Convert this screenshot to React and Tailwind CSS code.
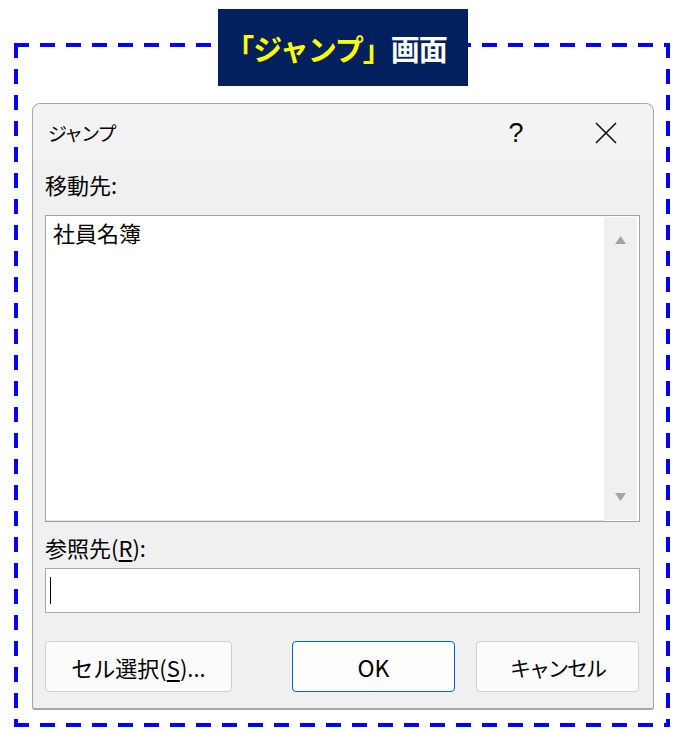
export default function App() {
  const font = { fontFamily: '"Noto Sans CJK JP", "Noto Sans", sans-serif' };

  return (
    <div className="w-[683px] h-[735px] bg-white relative" style={font}>
      {/* dashed frame */}
      <div className="pt-[43px] pl-[14px]">
        <div className="w-[656px] h-[684px] p-[4px] pt-[60px] pl-[18px] bg-no-repeat [background-image:repeating-linear-gradient(90deg,#0000ff_0_15px,transparent_15px_26px),repeating-linear-gradient(90deg,#0000ff_0_15px,transparent_15px_26px),repeating-linear-gradient(180deg,#0000ff_0_15px,transparent_15px_26px),repeating-linear-gradient(180deg,#0000ff_0_15px,transparent_15px_26px)] [background-size:100%_4px,100%_4px,4px_100%,4px_100%] [background-position:0_0,0_100%,0_0,100%_0]">
          {/* dialog */}
          <div className="w-[622px] h-[607px] bg-[#f0f0f0] border border-b-2 border-[#a6a6a6] rounded-t-[8px] rounded-b-[3px] flex flex-col text-[#000]">
            <div className="h-[56px] bg-[#f3f3f3] rounded-t-[8px] flex items-center pl-[15px] pr-[36px]">
              <span className="text-[19px] leading-[24px] tracking-[-2px] flex-1 mt-[2px]">ジャンプ</span>
              <span className="text-[27px] leading-[24px] w-[20px] text-center mr-[69px] mt-[2px]" style={{ fontFamily: '"Liberation Sans", sans-serif' }}>?</span>
              <svg width="22" height="22" viewBox="0 0 22 22" className="mt-[2px]">
                <path d="M1 1 L21 21 M21 1 L1 21" stroke="#111" strokeWidth="1.6" fill="none" />
              </svg>
            </div>

            <div className="flex flex-col pl-[12px] pr-[13px]">
              <div className="text-[22px] leading-[24px] mt-[12px]">移動先:</div>

              <div className="mt-[19px] h-[307px] border border-[#a0a0a0] bg-white flex">
                <div className="flex-1 pl-[7px] pt-[4px] text-[22px] leading-[24px] border-b border-[#e4e4e4]">社員名簿</div>
                <div className="w-[33px] my-[1px] mr-[2px] bg-[#f0f0f0] flex flex-col items-center justify-between py-[19px]">
                  <svg width="11" height="8" viewBox="0 0 11 8">
                    <path d="M5.5 0 L11 8 L0 8 Z" fill="#a3a3a3" />
                  </svg>
                  <svg width="11" height="8" viewBox="0 0 11 8">
                    <path d="M0 0 L11 0 L5.5 8 Z" fill="#a3a3a3" />
                  </svg>
                </div>
              </div>

              <div className="text-[22px] leading-[24px] mt-[13px]">
                参照先(<span className="underline underline-offset-[3px]">R</span>):
              </div>

              <div className="mt-[9px] h-[45px] border border-[#a8a8a8] bg-white flex items-center pl-[4px]">
                <span className="w-px h-[27px] bg-black" />
              </div>

              <div className="mt-[28px] flex items-center">
                <button className="w-[187px] h-[51px] rounded-[4px] border border-[#d0d0d0] bg-[#fbfbfb] text-[22px] leading-[24px]">
                  セル選択(<span className="underline underline-offset-[3px]">S</span>)...
                </button>
                <button className="ml-[60px] w-[163px] h-[51px] rounded-[4px] border border-[#0067c0] bg-[#fdfdfd] text-[23px] leading-[24px]">
                  OK
                </button>
                <button className="ml-[21px] w-[163px] h-[51px] rounded-[4px] border border-[#d0d0d0] bg-[#fbfbfb] text-[21px] leading-[24px] tracking-[-2px]">
                  キャンセル
                </button>
              </div>
            </div>
          </div>
        </div>
      </div>

      {/* title badge over the frame */}
      <div className="absolute top-[9px] left-[218px] w-[250px] h-[77px] bg-[#03205e] flex items-center justify-center pr-[14px]">
        <span className="text-[29px] font-bold leading-[36px] tracking-[-1px]">
          <span className="text-[#ffff00]">「ジャンプ」</span>
          <span className="text-white">画面</span>
        </span>
      </div>
    </div>
  );
}
